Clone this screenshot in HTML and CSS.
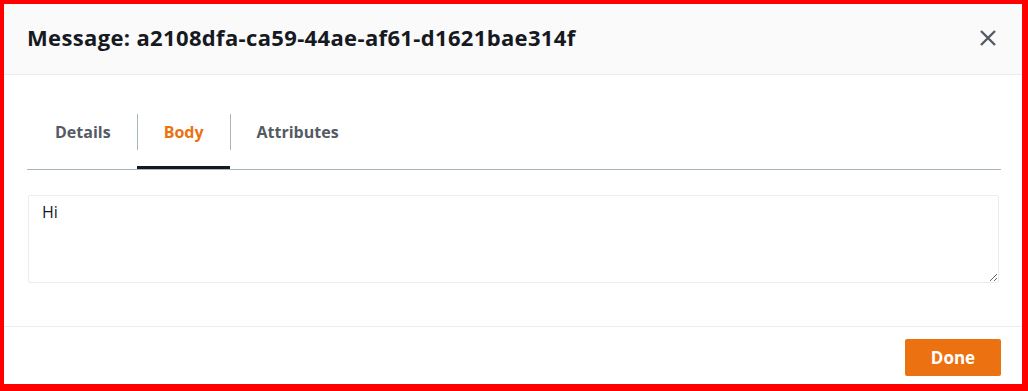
FILE: index.html
```
<!DOCTYPE html>
<html lang="en">
<head>
<meta charset="utf-8">
<title>Message</title>
<link rel="stylesheet" href="styles.css">
</head>
<body>
<div class="modal">
  <div class="modal-header">
    <h2 class="modal-title">Message: a2108dfa-ca59-44ae-af61-d1621bae314f</h2>
    <button class="close-btn" aria-label="Close">
      <svg width="18" height="18" viewBox="0 0 18 18"><path d="M2 2 L16 16 M16 2 L2 16" stroke="#545b64" stroke-width="2.4" stroke-linecap="butt" fill="none"/></svg>
    </button>
  </div>
  <div class="modal-content">
    <div class="tab-list">
      <div class="tab"><span class="tab-label first">Details</span></div>
      <div class="tab active"><span class="tab-label">Body</span></div>
      <div class="tab"><span class="tab-label">Attributes</span></div>
    </div>
    <textarea class="body-text">Hi</textarea>
  </div>
  <div class="modal-footer">
    <button class="done-btn">Done</button>
  </div>
</div>
</body>
</html>
```
FILE: styles.css
```
html, body {
  margin: 0;
  height: 391px;
  background: #ff0000;
  overflow: hidden;
}
body {
  padding: 4px 6px 7px 4px;
  box-sizing: border-box;
  font-family: "Open Sans", sans-serif;
  color: #16191f;
}
.modal {
  background: #ffffff;
  height: 380px;
  display: flex;
  flex-direction: column;
}
.modal-header {
  background: #fafafa;
  border-bottom: 1px solid #eaeded;
  height: 71px;
  box-sizing: border-box;
  padding: 18px 23px 0 23px;
  display: flex;
  align-items: flex-start;
  justify-content: space-between;
}
.modal-title {
  margin: 0;
  font-size: 22px;
  line-height: 30px;
  font-weight: 700;
  letter-spacing: 0.35px;
  color: #16191f;
}
.close-btn {
  background: none;
  border: 0;
  padding: 0;
  margin: 7px 2px 0 0;
  width: 18px;
  height: 18px;
  display: flex;
  cursor: pointer;
}
.modal-content {
  flex: 1;
  padding: 39px 21px 0 23px;
  display: flex;
  flex-direction: column;
}
.tab-list {
  display: flex;
  padding-left: 1px;
  border-bottom: 1px solid #aab7b8;
}
.tab {
  padding-bottom: 16px;
  border-bottom: 3px solid transparent;
}
.tab.active {
  border-bottom-color: #16191f;
}
.tab-label {
  display: block;
  height: 36px;
  line-height: 36px;
  padding: 0 26px;
  border-left: 1px solid #aab7b8;
  font-size: 16px;
  font-weight: 700;
  color: #545b64;
}
.tab-label.first {
  border-left-color: transparent;
}
.tab.active .tab-label {
  color: #ec7211;
}
.body-text {
  margin: 25px 2px 0 1px;
  height: 88px;
  box-sizing: border-box;
  border: 1px solid #eaeded;
  border-radius: 2px;
  padding: 5px 13px;
  font-family: "Open Sans", sans-serif;
  font-size: 16px;
  line-height: 22px;
  color: #16191f;
  background: #ffffff;
  outline: none;
}
.modal-footer {
  border-top: 1px solid #eaeded;
  padding: 12px 21px 0 23px;
  height: 58px;
  box-sizing: border-box;
  display: flex;
  justify-content: flex-end;
  align-items: flex-start;
}
.done-btn {
  background: #ec7211;
  border: 0;
  border-radius: 2px;
  color: #ffffff;
  font-family: "Open Sans", sans-serif;
  font-size: 17px;
  font-weight: 700;
  height: 37px;
  width: 96px;
  padding: 0;
  cursor: pointer;
}
```
